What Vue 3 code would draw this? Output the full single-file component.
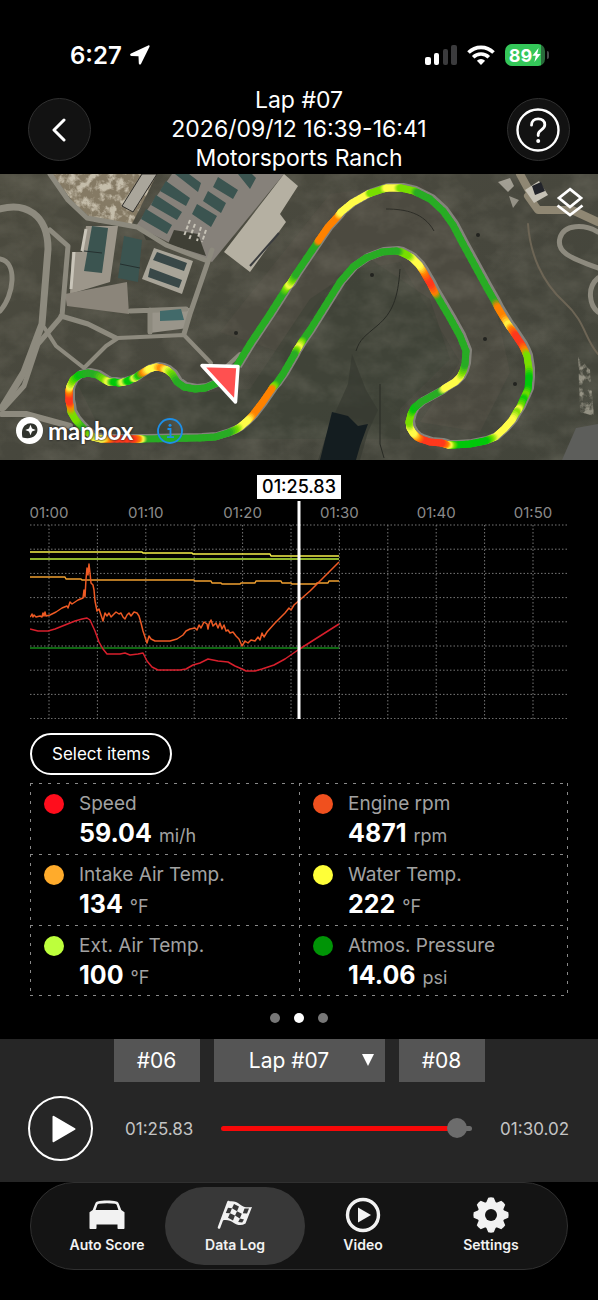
<template>
  <div class="screen">
    <div class="status-bar">
      <div class="status-time">
        <span>6:27</span>
        <svg width="20" height="20" viewBox="0 0 20 20" fill="#fff">
          <path d="M18.2.4 1 8.6c-1.4.7-1 2.2.4 2.3l7.1.3.3 7.1c.1 1.500 1.700 1.800 2.300.4L19.500 1.700c.4-.9-.4-1.700-1.300-1.300z"/>
        </svg>
      </div>
      <div class="status-icons">
        <svg width="32" height="20" viewBox="0 0 32 20">
          <rect x="0" y="12" width="6" height="8" rx="2" fill="#fff"/>
          <rect x="9" y="8" width="5" height="12" rx="2" fill="#fff"/>
          <rect x="18" y="4" width="5" height="16" rx="2" fill="#3b3b3d"/>
          <rect x="26" y="0" width="6" height="20" rx="2" fill="#3b3b3d"/>
        </svg>
        <svg width="28" height="20" viewBox="0 0 28 20" fill="none" stroke="#fff" stroke-width="3.600">
          <path d="M1.500 7.600a17.500 17.500 0 0 1 25 0"/>
          <path d="M6.200 12.300a11 11 0 0 1 15.600 0"/>
          <path d="M14 20l-4.100-4.200a5.800 5.800 0 0 1 8.200 0z" fill="#fff" stroke="none"/>
        </svg>
        <div class="battery">
          <span>89</span>
          <svg width="9" height="14" viewBox="0 0 9 14" fill="#fff">
            <path d="M6.600 0 .4 7.800h3.400L2.400 14l6.200-8H5.200z"/>
          </svg>
        </div>
      </div>
    </div>

    <header class="header">
      <button class="round-btn" aria-label="Back">
        <svg width="18" height="24" viewBox="0 0 18 24" fill="none" stroke="#fff" stroke-width="3" stroke-linecap="round" stroke-linejoin="round">
          <path d="M13 2 3 12l10 10"/>
        </svg>
      </button>
      <h1 class="title">
        <span>Lap #07</span>
        <span>2026/09/12 16:39-16:41</span>
        <span>Motorsports Ranch</span>
      </h1>
      <button class="round-btn" aria-label="Help">
        <svg width="44" height="44" viewBox="0 0 44 44" fill="none" stroke="#fff" stroke-width="2.400" stroke-linecap="round">
          <circle cx="22" cy="22" r="20.500"/>
          <path d="M15.500 17.200c0-4 2.800-6.400 6.700-6.400 3.800 0 6.600 2.300 6.600 5.900 0 5.200-6.600 5-6.600 9.800v1" stroke-width="2.800"/>
          <circle cx="22.200" cy="33" r="2" fill="#fff" stroke="none"/>
        </svg>
      </button>
    </header>

    <section class="map">
      <svg class="map-canvas" viewBox="0 0 598 286">
        <defs>
          <filter id="ground" x="0" y="0" width="100%" height="100%">
            <feTurbulence type="fractalNoise" baseFrequency="0.03 0.04" numOctaves="5" seed="8"/>
            <feColorMatrix values="0 0 0 0 0.5  0 0 0 0 0.47  0 0 0 0 0.38  1.300 0 0 0 -0.480"/>
          </filter>
          <filter id="rubble" x="0" y="0" width="100%" height="100%">
            <feTurbulence type="fractalNoise" baseFrequency="0.12" numOctaves="4" seed="3"/>
            <feColorMatrix values="0 0 0 0 0.75  0 0 0 0 0.7  0 0 0 0 0.58  4 0 0 0 -1.700"/>
            <feComposite in2="SourceGraphic" operator="in"/>
          </filter>
          <linearGradient id="land" x1="0" y1="0" x2="1" y2="1">
            <stop offset="0" stop-color="#4c4b3f"/>
            <stop offset="0.500" stop-color="#47473d"/>
            <stop offset="1" stop-color="#42443a"/>
          </linearGradient>
        </defs>
        <rect width="598" height="286" fill="url(#land)"/>
        <path d="M330 20 420 8l70 100 20 90-30 60-60-10 40-60-60-100-60 10-60 80-60-20z" fill="#504c42" opacity=".6"/>
        <path d="M75 205 120 212l50-10 20 18 60-5 60-90 60-40 60 40 20 60-50 50 0 30-240 0-60-10z" fill="#394033" opacity=".5"/>
        <rect width="598" height="286" filter="url(#ground)" opacity=".25"/>

        <!-- gravel lots and paved yards -->
        <path d="M52 0h105l-26 52-36-4-22-20z" fill="#857a64"/>
        <path d="M52 0h105l-26 52-36-4-22-20z" filter="url(#rubble)" opacity=".7"/>
        <path d="M172 0h112l-72 88-32-14-44-22z" fill="#86817a"/>
        <path d="M284 0 298 12 280 40l6 8-36 50-26-20z" fill="#b5b0a2"/>
        <path d="M279 59 250 92" stroke="#3a3c3e" stroke-width="2"/>
        <path d="M157 0 133 38l-11-6L142 0z" fill="#aaa69b" stroke="#2e2d29"/>
        <path d="M86 52h32l-8 56-40 12 2-42h10z" fill="#9c968a"/>
        <path d="M65 120l62-12 2 32-62-8z" fill="#8b857a"/>
        <path d="M154 74l39 13-11 33-40-15z" fill="#a8a498"/>
        <path d="M150 135l40-1-2 20-38 5z" fill="#99958a"/>
        <path d="M168 70l38 12-8-22-24-4z" fill="#3f3f35"/>
        <path d="M140 53l20 14-14-1z" fill="#3f3f35"/>

        <!-- service roads -->
        <g fill="none" stroke="#8d8a7e" stroke-linecap="round" stroke-linejoin="round">
          <path d="M50 0 68 26 87 44l50 9 29 18 39 15" stroke-width="5"/>
          <path d="M0 35C25 28 48 40 48 75L42 150 24 198 2 234" stroke-width="7"/>
          <path d="M50 56 68 72 62 142 38 170 24 212 4 234" stroke-width="5"/>
          <path d="M42 150 56 172 84 194 106 172 118 164l66-3 27 28" stroke-width="4"/>
          <path d="M61 142 88 150 116 164" stroke-width="5"/>
          <path d="M0 85C18 88 14 122 0 137" stroke-width="5"/>
          <path d="M212 76 190 140l-6 20M130 137l56-2M150 136v22" stroke-width="5"/>
          <path d="M2 240h24l44 12" stroke-width="6"/>
          <path d="M528 22 538 36l34 0 26 12M520 0l12 22" stroke="#8f8773" stroke-width="8"/>
          <path d="M598 94C570 84 556 78 560 64S584 50 598 58M598 104c-12 10-8 28 0 34" stroke-width="5"/>
          <path d="M528 50c2 30 14 58 36 78s20 36 34 52" stroke="#6d6555" stroke-width="2"/>
          <path d="M216 202l24-22" stroke-width="4"/>
        </g>

        <!-- hangars and houses -->
        <g fill="#3b5450">
          <path d="M92 52l16 2-6 45-18-2z"/>
          <path d="M124 62l18 4-4 42-20-4z"/>
          <path d="M146 35l26 16-5 9-26-15zM156 21l26 17-5 8-26-15zM166 7l24 17-4 8-26-15zM175 0h14l12 9-3 9z"/>
          <path d="M197 30l20 12-6 11-19-13zM208 17l18 12-5 10-18-12zM218 3l20 13-5 9-20-12zM238 0h14l4 4-6 11z"/>
          <path d="M160 137l21-2 3 11-24 1z" fill="#426a6a"/>
          <path d="M157 78l30 11-3 8-31-11zM150 94l32 12-3 8-31-11z" fill="#394848"/>
        </g>
        <path d="M84 77l18 2M120 90l20 4" stroke="#25302f"/>
        <path d="M86 55l-4 22M74 78l-3 37" stroke="#c9c5b9" stroke-width="3"/>
        <g fill="#c6c2b6">
          <path d="M190 46l-6 16M195 50l-6 16M201 53l-4 14M206 56l-4 12" stroke="#c6c2b6" stroke-width="2" stroke-dasharray="4 2"/>
          <path d="M498 8l12-4 4 8-6 6z" opacity=".7"/>
          <path d="M525 16l14-9 9 14-14 8z"/>
          <path d="M509 22l10 4-6 8z" opacity=".6"/>
        </g>
        <path d="M532 12l9-4 4 9-10 4z" fill="#22242a"/>

        <!-- pond and creek -->
        <path d="M352 180l-4 30-18 40-12 36h42l8-28 10-22-12-20z" fill="#34372e" opacity=".6"/>
        <path d="M332 238 348 242l10 10 10-2-8 22-4 14h-36z" fill="#141d20"/>
        <path d="M400 95c-2 30-8 44-22 56s-18 14-22 26M380 210v60l4 14" fill="none" stroke="#282a24"/>
        <path d="M576 254l22-4v36h-36z" fill="#5d5e5b"/>
        <path d="M578 182l12 14 4 46-14-4z" filter="url(#rubble)" opacity=".5"/>
        <path d="M386 35c20 0 38 4 48 22" fill="none" stroke="#2d2d27"/>
        <g fill="#22231f">
          <circle cx="372" cy="101" r="2"/>
          <circle cx="478" cy="61" r="2"/>
          <circle cx="485" cy="165" r="2"/>
          <circle cx="515" cy="210" r="2"/>
          <circle cx="236" cy="159" r="2"/>
        </g>

        <!-- asphalt under the driven line -->
        <polyline :points="asphalt" fill="none" stroke="#85837c" stroke-width="8" stroke-linejoin="round" transform="translate(2 -1)"/>
        <line
          v-for="(s, i) in trackSegments"
          :key="i"
          :x1="s.x1" :y1="s.y1" :x2="s.x2" :y2="s.y2"
          :stroke="s.color"
          stroke-width="7"
          stroke-linecap="round"
        />
        <path d="M202 191.500 238 192.500 235.500 228z" fill="#ff5050" stroke="#fff" stroke-width="3.500" stroke-linejoin="round"/>
      </svg>

      <button class="layers" aria-label="Map layers">
        <svg width="28" height="30" viewBox="0 0 28 30" fill="none" stroke="#fff" stroke-width="2.800">
          <path d="M14 2.200 25 11 14 20 3 11z"/>
          <path d="M1.500 18.500 14 28l12.500-9.500"/>
        </svg>
      </button>
      <div class="attribution">
        <a class="mapbox" href="#">
          <svg width="27" height="27" viewBox="0 0 27 27">
            <circle cx="13.500" cy="13.500" r="13.500" fill="#fff"/>
            <path d="M6.500 20.600c-1-4.600-.6-9.200 2.200-12 3.200-3.200 8.100-3.200 10.800-.5s2.700 7.400-.5 10.500c-3 3-7.900 3-12.500 2z" fill="#30332d"/>
            <path d="M14.500 7.800l1.500 3.700 3.700 1.500-3.700 1.500-1.500 3.700-1.500-3.700L9.300 13l3.700-1.500z" fill="#fff"/>
          </svg>
          <span>mapbox</span>
        </a>
        <button class="info" aria-label="Map information">
          <svg width="26" height="26" viewBox="0 0 26 26" fill="none" stroke="#1d8fe8" stroke-width="1.800">
            <circle cx="13" cy="13" r="12"/>
            <path d="M10.500 11h3v8M10 19.200h7"/>
            <circle cx="13" cy="7.200" r="1.500" fill="#1d8fe8" stroke="none"/>
          </svg>
        </button>
      </div>
    </section>

    <section class="chart">
      <output class="cursor-time">01:25.83</output>
      <svg class="plot" viewBox="0 0 538 220">
        <text v-for="t in ticks" :key="t.label" :x="t.x" y="19" class="tick">{{ t.label }}</text>
        <g stroke="#777" stroke-dasharray="1.500 2">
          <line v-for="y in gridY" :key="'y' + y" x1="0" x2="538" :y1="y" :y2="y"/>
          <line v-for="x in gridX" :key="'x' + x" :x1="x" :x2="x" y1="26" y2="220"/>
        </g>
        <polyline
          v-for="s in series"
          :key="s.color"
          :points="s.points"
          :stroke="s.color"
          fill="none"
          stroke-width="1.500"
          stroke-linejoin="round"
        />
        <line x1="269" x2="269" y1="2" y2="220" stroke="#fff" stroke-width="3"/>
      </svg>
    </section>

    <section class="readout">
      <button class="select-items">Select items</button>
      <dl class="values">
        <div v-for="v in values" :key="v.name" class="value">
          <i class="dot" :style="{ background: v.color }"></i>
          <dt>{{ v.name }}</dt>
          <dd><b>{{ v.value }}</b> <small>{{ v.unit }}</small></dd>
        </div>
      </dl>
      <div class="pager">
        <span></span>
        <span class="current"></span>
        <span></span>
      </div>
    </section>

    <section class="player">
      <div class="laps">
        <button class="lap">#06</button>
        <div class="lap-select">
          <select v-model="lap" aria-label="Lap">
            <option value="07">Lap #07</option>
          </select>
          <svg width="12" height="12" viewBox="0 0 12 12" fill="#fff"><path d="M0 0h12L6 12z"/></svg>
        </div>
        <button class="lap">#08</button>
      </div>
      <div class="transport">
        <button class="play" aria-label="Play">
          <svg width="24" height="28" viewBox="0 0 24 28" fill="#fff" stroke="#fff" stroke-width="2" stroke-linejoin="round">
            <path d="M1.500 1.800 22.500 14 1.500 26.200z"/>
          </svg>
        </button>
        <span class="time">01:25.83</span>
        <input
          v-model="position"
          class="seek"
          type="range"
          min="0"
          max="100"
          aria-label="Playback position"
          :style="{ '--played': position + '%' }"
        >
        <span class="time">01:30.02</span>
      </div>
    </section>

    <nav class="tabs">
      <a href="#" class="tab">
        <svg width="36" height="36" viewBox="0 0 36 36" fill="#f2f2f2">
          <path fill-rule="evenodd" d="M8.500 4.500C14 3.200 22 3.200 27.500 4.500c1.200.3 1.800 1 2.200 2l2.600 6.500 3.200 2.200V31c0 .6-.4 1-1 1h-5c-.6 0-1-.4-1-1v-3.500H7.500V31c0 .6-.4 1-1 1h-5c-.6 0-1-.4-1-1V15.200L3.700 13l2.600-6.500c.4-1 1-1.700 2.200-2zM10 6.800c-1 .2-1.400.5-1.700 1.300L6.600 13h22.800l-1.700-4.900c-.3-.8-.7-1.100-1.700-1.300-5-.8-11-.8-16 0z"/>
        </svg>
        <span>Auto Score</span>
      </a>
      <a href="#" class="tab active">
        <svg width="36" height="36" viewBox="0 0 36 36">
          <path d="M11.500 5 2 30.500" stroke="#f2f2f2" stroke-width="2.600" stroke-linecap="round"/>
          <path d="M11.500 4.500c5-.8 8 .2 11.500 3 3.500 2.700 7 3.400 12 2.500L28.500 26.500c-4 2.400-8 2-12-.8-3.700-2.500-7-3.200-11-2.200z" fill="#f2f2f2"/>
          <g fill="#383838">
            <path d="M17 7l5 2.600-2 4.600-5-3zM11 10.800l4 .4-2 5-4.200-.2zM20 14.200l4.800 2.600-2 4.800-4.800-3zM13 16.200l5 2.200-2 5-5-2.600zM27.500 11.400l4.500.2-2 4.800-4.200-.2zM23 21.600l4 .8-1.800 3-4-.4z"/>
          </g>
        </svg>
        <span>Data Log</span>
      </a>
      <a href="#" class="tab">
        <svg width="36" height="36" viewBox="0 0 36 36" fill="#f2f2f2">
          <circle cx="18" cy="18" r="15.500" fill="none" stroke="#f2f2f2" stroke-width="3.400"/>
          <path d="M13 10.500 26 18l-13 7.500z"/>
        </svg>
        <span>Video</span>
      </a>
      <a href="#" class="tab">
        <svg width="36" height="36" viewBox="0 0 36 36">
          <g transform="translate(18 18)" fill="#f2f2f2">
            <circle r="13.500"/>
            <path v-for="n in 8" :key="n" d="M-5-12-2.800-17.300Q0-18 2.800-17.300L5-12z" :transform="`rotate(${n * 45})`"/>
            <circle r="6" fill="#141414"/>
          </g>
        </svg>
        <span>Settings</span>
      </a>
    </nav>
  </div>
</template>

<script setup>
import { ref } from 'vue'

const lap = ref('07')
const position = ref(98)

const values = [
  { name: 'Speed', value: '59.04', unit: 'mi/h', color: '#ff0d1c' },
  { name: 'Engine rpm', value: '4871', unit: 'rpm', color: '#f0501e' },
  { name: 'Intake Air Temp.', value: '134', unit: '°F', color: '#ffab2b' },
  { name: 'Water Temp.', value: '222', unit: '°F', color: '#ffff38' },
  { name: 'Ext. Air Temp.', value: '100', unit: '°F', color: '#bdff3c' },
  { name: 'Atmos. Pressure', value: '14.06', unit: 'psi', color: '#009406' }
]

const ticks = ['01:00', '01:10', '01:20', '01:30', '01:40', '01:50'].map((label, i) => ({
  label,
  x: 19 + i * 96.8
}))
const gridX = Array.from({ length: 11 }, (_, i) => 19 + i * 48.4)
const gridY = Array.from({ length: 9 }, (_, i) => 26 + i * 24.2)

const series = [
  { color: '#f5f04a', points: '0,53 112,53 113,54 162,54 163,55 240,55 241,57 309,57' },
  { color: '#bdf23c', points: '0,60 309,60' },
  {
    color: '#f0a030',
    points: '0,78 35,78 36,80 51,80 52,81 164,81 165,82 181,82 182,84 191,84 192,85 210,85 211,84 225,84 226,82 251,82 252,84 261,84 262,85 286,85 287,84 298,84 299,82 309,82'
  },
  { color: '#148a18', points: '0,149 309,149' },
  {
    color: '#ee5a24',
    points: '0,118 1,117 2,115 3,118 4,116 6,118 10,117 12,118 13,114 14,117 15,113 16,117 20,116 26,113 32,109 37,107 38,109 40,103 42,105 48,101 53,99 54,91 55,98 56,80 57,69 58,76 59,65 60,74 61,84 63,86 64,91 65,102 67,112 69,110 71,116 73,122 75,114 77,117 79,114 81,118 83,116 86,113 89,115 91,114 93,118 95,120 97,116 99,114 101,117 104,113 107,114 109,117 111,124 113,132 115,138 117,144 119,137 121,140 125,142 130,142 140,142 147,140 153,136 156,132 160,130 165,129 167,131 169,126 171,129 174,123 177,125 178,130 179,125 181,121 183,127 186,124 188,129 190,124 192,130 194,126 196,132 198,131 200,134 203,133 206,137 209,140 212,147 215,142 218,144 221,141 225,142 228,138 230,141 232,134 234,138 237,133 245,124 255,114 259,109 261,111 264,106 280,92 290,82 300,72 309,63'
  },
  {
    color: '#d81f2c',
    points: '0,130 8,132 18,132 25,130 35,126 45,122 52,120 57,119 60,121 65,132 69,143 73,150 77,155 90,155 95,154 100,156 108,155 113,154 117,162 122,168 128,171 150,171 156,170 163,166 170,164 178,160 183,161 188,162 198,163 205,167 212,170 216,172 225,172 232,170 238,168 244,166 255,160 268,151 309,125'
  }
]

// G coasting green, g bright green, l lime, y yellow, o orange, r red
const palette = {
  G: [40, 172, 36],
  g: [0, 200, 10],
  l: [120, 222, 0],
  y: [255, 252, 72],
  o: [255, 130, 0],
  r: [255, 56, 28]
}

const track = `236,193,G 250,170,G 270,140,G 284,118,G 287,113,l 290,110,y 293,105,l 296,100,G 317,69,G 319,66,o 328,53,o
338,42,o 341,38,y 352,29,y 368,20,y 371,19,l 383,15,l 387,14,y 397,14,y 401,14,l 414,17,l 418,19,G 430,25,G 443,37,G
453,51,G 463,70,G 475,92,G 487,114,G 495,128,G 498,134,o 504,144,o 509,152,y 512,156,o 516,162,r 522,171,r 525,177,o
527,182,l 529,195,l 529,204,g 528,215,g 525,222,l 523,226,g 520,233,l 518,236,y 516,239,l 512,246,y 504,255,y 495,263,y
490,265,l 485,267,g 470,270,g 455,271,g 451,271,l 448,271,y 445,270,o 441,269,r 430,268,r 421,265,r 417,263,o 413,259,y
410,254,y 409,248,l 411,240,l 414,234,g 421,228,G 441,217,G 445,214,y 455,208,y 460,203,y 463,197,l 465,190,G 466,177,G
460,162,G 450,144,G 437,122,G 434,117,o 430,109,r 427,104,r 423,97,o 419,91,y 412,84,y 407,81,l 401,78,l 396,77,G
382,78,G 366,84,G 353,93,G 340,108,G 325,132,G 310,156,G 303,166,G 301,169,l 298,174,y 296,177,l 294,181,G 283,200,G
276,210,G 273,213,l 271,216,o 262,229,o 252,242,o 247,247,y 240,253,y 235,256,l 228,259,G 215,263,G 200,264,G 144,265,G
140,265,y 137,265,o 132,265,r 112,265,r 106,265,o 101,265,y 93,263,y 86,257,l 80,251,G 75,245,l 71,238,l 70,231,o
69,227,r 69,221,r 69,216,o 70,212,y 73,206,l 79,201,g 88,199,G 97,201,G 105,206,l 109,208,y 114,208,g 119,209,g
124,208,y 128,207,g 132,205,g 135,204,y 139,201,g 144,198,o 149,195,y 156,193,y 162,194,o 167,196,y 172,200,l 177,208,G
184,213,G 195,215,G 205,214,G 222,207,G`
  .split(/\s+/)
  .map((p) => {
    const [x, y, c] = p.split(',')
    return { x: Number(x), y: Number(y), rgb: palette[c] }
  })

const asphalt = track.map((p) => `${p.x},${p.y}`).join(' ')

// each stretch is cut in four so that the speed colours run into each other
const STEPS = 4
const trackSegments = track.slice(1).flatMap((b, i) => {
  const a = track[i]
  const at = (t) => [a.x + (b.x - a.x) * t, a.y + (b.y - a.y) * t]
  return Array.from({ length: STEPS }, (_, k) => {
    const [x1, y1] = at(k / STEPS)
    const [x2, y2] = at((k + 1) / STEPS)
    const mid = (k + 0.5) / STEPS
    const rgb = a.rgb.map((v, n) => Math.round(v + (b.rgb[n] - v) * mid))
    return { x1, y1, x2, y2, color: `rgb(${rgb.join(',')})` }
  })
})
</script>

<style>
body {
  margin: 0;
  background: #000;
}
</style>

<style scoped>
.screen {
  min-height: 100vh;
  background: #000;
  color: #fff;
  font-family: Inter, "Liberation Sans", sans-serif;
}

.screen svg {
  display: block;
  flex: none;
}

button,
select {
  padding: 0;
  border: 0;
  background: none;
  color: inherit;
  font: inherit;
  cursor: pointer;
}

a {
  color: inherit;
  text-decoration: none;
}

.status-bar {
  display: flex;
  align-items: center;
  justify-content: space-between;
  height: 62px;
  padding: 24px 53px 0 70px;
}

.status-time,
.status-icons {
  display: flex;
  align-items: center;
}

.status-time {
  gap: 8px;
  font-size: 24px;
  font-weight: 600;
}

.status-icons {
  gap: 10px;
}

.battery {
  position: relative;
  display: flex;
  align-items: center;
  justify-content: center;
  width: 40px;
  height: 22px;
  border-radius: 7px;
  background: linear-gradient(90deg, #34c759 36px, #2a6b3b 36px);
  font-size: 18px;
  font-weight: 700;
}

.battery::after {
  content: "";
  position: absolute;
  right: -4px;
  width: 2px;
  height: 8px;
  border-radius: 0 2px 2px 0;
  background: #48484a;
}

.header {
  display: flex;
  align-items: center;
  justify-content: space-between;
  padding: 0 28px;
}

.round-btn {
  display: grid;
  place-items: center;
  box-sizing: border-box;
  width: 63px;
  height: 63px;
  border: 1px solid #303030;
  border-radius: 50%;
  background: #121212;
}

.title {
  display: flex;
  flex-direction: column;
  margin: 0;
  font-size: 23px;
  font-weight: 400;
  line-height: 29px;
  text-align: center;
}

.map {
  position: relative;
  margin-top: 1px;
}

.map-canvas {
  width: 100%;
}

.layers {
  position: absolute;
  top: 13px;
  right: 14px;
}

.attribution {
  position: absolute;
  bottom: 16px;
  left: 16px;
  display: flex;
  align-items: center;
  gap: 24px;
}

.mapbox {
  display: flex;
  align-items: center;
  gap: 5px;
  font-family: Lato, Inter, sans-serif;
  font-size: 24px;
  font-weight: 700;
  line-height: 27px;
  text-shadow: 0 0 2px #222, 0 0 2px #222;
}

.chart {
  display: flex;
  flex-direction: column;
  align-items: center;
  padding: 15px 30px 0;
}

.cursor-time {
  padding: 0 5px;
  background: #fff;
  color: #000;
  font-size: 18px;
  font-weight: 500;
  line-height: 24px;
}

.plot {
  width: 100%;
}

.tick {
  fill: #8a8a8a;
  font-size: 15px;
  text-anchor: middle;
}

.readout {
  padding: 14px 30px 16px;
}

.select-items {
  box-sizing: border-box;
  height: 42px;
  padding: 0 20px;
  border: 2px solid #fff;
  border-radius: 21px;
  font-size: 17px;
}

.values {
  --dash: #8a8a8a 0 3px, transparent 3px 9px;
  display: grid;
  grid-template-columns: 1fr 1fr;
  margin: 8px 0 17px;
  background:
    repeating-linear-gradient(90deg, var(--dash)) bottom / 100% 1px no-repeat,
    repeating-linear-gradient(180deg, var(--dash)) right / 1px 100% no-repeat;
}

.value {
  display: grid;
  grid-template-columns: 20px 1fr;
  column-gap: 15px;
  align-items: center;
  height: 59px;
  padding: 8px 14px 4px;
  background:
    repeating-linear-gradient(90deg, var(--dash)) top / 100% 1px no-repeat,
    repeating-linear-gradient(180deg, var(--dash)) left / 1px 100% no-repeat;
}

.dot {
  width: 20px;
  height: 20px;
  border-radius: 50%;
}

.value dt {
  color: #a2a2a2;
  font-size: 19px;
  line-height: 25px;
}

.value dd {
  display: flex;
  align-items: baseline;
  grid-column: 2;
  gap: 7px;
  margin: 0;
  line-height: 34px;
}

.value b {
  font-size: 25px;
  font-weight: 700;
}

.value small {
  color: #a2a2a2;
  font-size: 18px;
}

.pager {
  display: flex;
  justify-content: center;
  gap: 14px;
}

.pager span {
  width: 10px;
  height: 10px;
  border-radius: 50%;
  background: #777;
}

.pager .current {
  background: #fff;
}

.player {
  padding-bottom: 21px;
  background: #262626;
}

.laps {
  display: flex;
  justify-content: center;
  gap: 14px;
  height: 43px;
  font-size: 21px;
}

.lap {
  width: 86px;
  background: #555;
}

.lap-select {
  position: relative;
  width: 171px;
  background: #555;
}

.lap-select select {
  width: 100%;
  height: 100%;
  padding-right: 20px;
  appearance: none;
  text-align: center;
}

.lap-select svg {
  position: absolute;
  top: 15px;
  right: 11px;
  pointer-events: none;
}

.transport {
  display: flex;
  align-items: center;
  padding: 14px 29px 0 28px;
}

.play {
  display: grid;
  place-items: center;
  box-sizing: border-box;
  width: 65px;
  height: 65px;
  margin-right: 32px;
  padding-left: 6px;
  border: 2px solid #fff;
  border-radius: 50%;
}

.time {
  color: #c4c4c4;
  font-size: 17px;
}

.seek {
  flex: 1;
  min-width: 0;
  height: 20px;
  margin: 0 28px;
  appearance: none;
  background: none;
}

.seek::-webkit-slider-runnable-track {
  height: 5px;
  border-radius: 3px;
  background: linear-gradient(90deg, #f80808 calc(var(--played) - 3%), #6c6c6c calc(var(--played) - 3%));
}

.seek::-webkit-slider-thumb {
  width: 20px;
  height: 20px;
  margin-top: -8px;
  border-radius: 50%;
  appearance: none;
  background: #6c6c6c;
}

.tabs {
  display: flex;
  box-sizing: border-box;
  height: 88px;
  margin: 0 30px;
  padding: 4px 12px;
  border: 1px solid #303030;
  border-radius: 44px;
  background: #141414;
}

.tab {
  display: flex;
  flex: 1;
  flex-direction: column;
  align-items: center;
  justify-content: center;
  margin: 0 -6px;
  border-radius: 39px;
  color: #f2f2f2;
  font-size: 14px;
  font-weight: 600;
  line-height: 20px;
}

.tab span {
  margin-top: 2px;
}

.tab.active {
  background: #383838;
}
</style>
